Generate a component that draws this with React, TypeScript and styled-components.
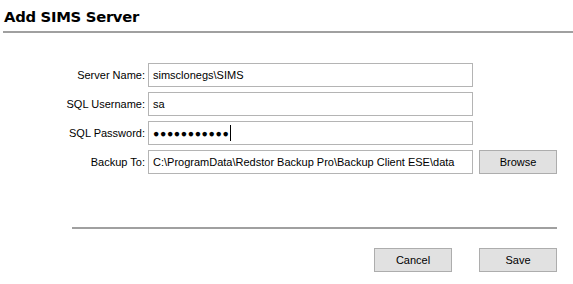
import { createGlobalStyle, styled } from "styled-components";

const GlobalStyle = createGlobalStyle`
  html, body {
    margin: 0;
    padding: 0;
    background: #ffffff;
  }
  body {
    font-family: "Liberation Sans", Arial, sans-serif;
    color: #000000;
  }
`;

const fields = [
  { label: "Server Name:", value: "simsclonegs\\SIMS" },
  { label: "SQL Username:", value: "sa" },
  { label: "SQL Password:", value: "", secret: 11 },
  { label: "Backup To:", value: "C:\\ProgramData\\Redstor Backup Pro\\Backup Client ESE\\data", browse: true },
];

const App = () => {
  return (
    <StPage>
      <GlobalStyle />
      <StHeader>
        <StTitle>Add SIMS Server</StTitle>
      </StHeader>
      <StForm>
        {fields.map((f) => (
          <StRow key={f.label}>
            <StLabel>{f.label}</StLabel>
            <StField>
              {f.secret ? (
                <>
                  <StDots>{"\u25CF".repeat(f.secret)}</StDots>
                  <StCaret />
                </>
              ) : (
                f.value
              )}
            </StField>
            {f.browse ? <StButton>Browse</StButton> : <span />}
          </StRow>
        ))}
      </StForm>
      <StFooter>
        <StDivider />
        <StActions>
          <StButton>Cancel</StButton>
          <StButton>Save</StButton>
        </StActions>
      </StFooter>
    </StPage>
  );
};

export default App;

const StPage = styled.div`
  width: 573px;
  height: 284px;
  overflow: hidden;
  background: #ffffff;
`;

const StHeader = styled.div`
  margin-left: 3px;
  padding: 8px 0 5px 1px;
  border-bottom: 2px solid #a0a0a0;
`;

const StTitle = styled.h1`
  margin: 0;
  font-family: "DejaVu Sans", Verdana, sans-serif;
  font-size: 14.8px;
  font-weight: 700;
  line-height: 18px;
  letter-spacing: -0.3px;
  color: #000000;
`;

const StForm = styled.div`
  display: grid;
  grid-template-columns: 145px 325px 81px;
  column-gap: 3px;
  row-gap: 5px;
  margin-top: 30px;
`;

const StRow = styled.div`
  display: contents;
`;

const StLabel = styled.div`
  display: flex;
  align-items: center;
  justify-content: flex-end;
  height: 24px;
  font-size: 11px;
  color: #000000;
`;

const StField = styled.div`
  display: flex;
  align-items: center;
  height: 24px;
  padding: 0 4px;
  box-sizing: border-box;
  border: 1px solid #b4b4b4;
  font-size: 11px;
  white-space: nowrap;
  overflow: hidden;
  color: #000000;
`;

const StDots = styled.span`
  font-size: 10.5px;
  letter-spacing: 0.6px;
`;

const StCaret = styled.span`
  width: 1px;
  height: 16px;
  margin-left: 1px;
  background: #000000;
`;

const StButton = styled.div`
  display: flex;
  align-items: center;
  justify-content: center;
  justify-self: end;
  width: 78px;
  height: 24px;
  box-sizing: border-box;
  border: 1px solid #adadad;
  background: #e1e1e1;
  font-size: 11px;
  color: #000000;
`;

const StFooter = styled.div`
  margin: 0 16px 0 72px;
  padding-top: 53px;
`;

const StDivider = styled.div`
  height: 2px;
  background: #a0a0a0;
`;

const StActions = styled.div`
  display: flex;
  justify-content: flex-end;
  gap: 27px;
  margin-top: 19px;
`;
